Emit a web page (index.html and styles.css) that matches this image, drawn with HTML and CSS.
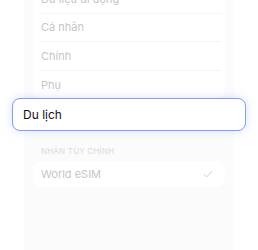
FILE: index.html
```html
<!DOCTYPE html>
<html lang="vi">
<head>
<meta charset="utf-8">
<link rel="stylesheet" href="styles.css">
</head>
<body>
<div class="sheet">
  <div class="card list">
    <div class="row">Dữ liệu di động</div>
    <div class="row">Cá nhân</div>
    <div class="row">Chính</div>
    <div class="row last">Phụ</div>
  </div>
  <div class="field">Du lịch</div>
  <div class="section-title">NHÃN TÙY CHỈNH</div>
  <div class="card">
    <div class="row last check-row">
      <span>World eSIM</span>
      <svg class="check" width="10" height="8" viewBox="0 0 10 8"><path d="M1 4.2 L3.6 7 L9 1" fill="none" stroke="#d2d2d2" stroke-width="1" stroke-linecap="round" stroke-linejoin="round"/></svg>
    </div>
  </div>
</div>
</body>
</html>
```
FILE: styles.css
```css
html, body {
  margin: 0;
  padding: 0;
  background: #ffffff;
  width: 258px;
  height: 250px;
  overflow: hidden;
  font-family: Inter, "Noto Sans", sans-serif;
}
.sheet {
  margin: -15px 24px 0;
  padding: 0 9px;
  height: 280px;
  background: #fbfbfb;
  border-radius: 14px;
}
.card {
  background: #ffffff;
  border-radius: 9px;
  padding: 0 3px 0 8px;
}
.row {
  box-sizing: border-box;
  height: 28.5px;
  display: flex;
  align-items: center;
  font-size: 11px;
  color: #c6c6c6;
  border-bottom: 1px solid #f4f4f4;
}
.row.last {
  border-bottom: none;
}
.check-row {
  height: 26px;
  justify-content: space-between;
  padding-right: 9px;
}
.check {
  display: block;
}
.field {
  box-sizing: border-box;
  margin: -1px -21px 0;
  height: 33px;
  border: 1px solid #7f9ef4;
  border-radius: 8px;
  background: #ffffff;
  box-shadow: 0 0 10px rgba(90, 125, 240, 0.22);
  display: flex;
  align-items: center;
  padding-left: 10px;
  font-size: 12px;
  font-weight: 400;
  color: #111111;
  position: relative;
}
.section-title {
  font-size: 8px;
  letter-spacing: 0.2px;
  color: #dadada;
  padding: 16px 0 5px 8px;
  line-height: 9px;
}
```
